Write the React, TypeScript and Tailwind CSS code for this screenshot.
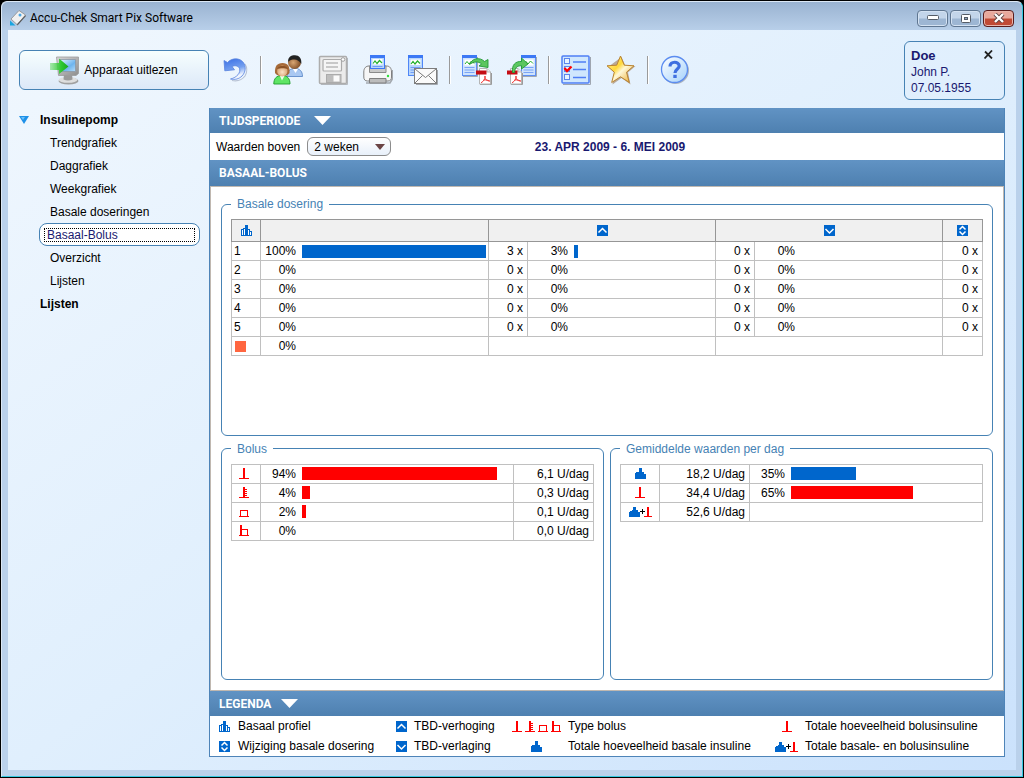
import React, { useState } from "react";

/* ---------- small symbols used in tables and legend ---------- */

const BLUE = "#0066cc";
const RED = "#ff0000";

function ProfileIcon() {
  return (
    <svg width="11" height="11" viewBox="0 0 11 11" shapeRendering="crispEdges" fill={BLUE} aria-hidden="true">
      <path d="M0 4H2V3H4V0H7V4H9V6H11V11H0Z" />
      <path fill="#fff" d="M1 5H2V10H1ZM3 4H4V10H3ZM7 5H8V10H7ZM9 7H10V10H9Z" />
    </svg>
  );
}

function BasalTotalIcon() {
  return (
    <svg width="11" height="11" viewBox="0 0 11 11" shapeRendering="crispEdges" fill={BLUE} aria-hidden="true">
      <path d="M0 11V5H1V4H4V0H7V4H9V6H11V11Z" />
    </svg>
  );
}

function ArrowTile({ kind }: { kind: "up" | "down" | "both" }) {
  return (
    <svg width="11" height="11" viewBox="0 0 11 11" aria-hidden="true">
      <rect width="11" height="11" fill={BLUE} />
      <g fill="none" stroke="#fff" strokeWidth="1.5">
        {kind === "up" && <path d="M1.5 7.5 5.5 3.5 9.5 7.5" />}
        {kind === "down" && <path d="M1.5 4 5.5 8 9.5 4" />}
        {kind === "both" && <path d="M2.5 4.5 5.5 1.5 8.5 4.5M2.5 6.5 5.5 9.5 8.5 6.5" />}
      </g>
    </svg>
  );
}

type BolusKind = "standard" | "scroll" | "extended" | "multiwave";

function BolusIcon({ kind }: { kind: BolusKind }) {
  return (
    <svg width="10" height="11" viewBox="0 0 10 11" shapeRendering="crispEdges" fill={RED} aria-hidden="true">
      <path d="M0 10H10V11H0Z" />
      {kind === "standard" && <path d="M4 0H6V10H4Z" />}
      {kind === "scroll" && <path d="M4 0H6V10H4ZM6 2H8V3H6ZM6 4H8V5H6ZM6 6H8V7H6ZM6 8H8V9H6Z" />}
      {kind === "extended" && <path d="M1 4H9V10H8V5H2V10H1Z" />}
      {kind === "multiwave" && <path d="M1 0H3V10H1ZM3 4H9V10H8V5H3Z" />}
    </svg>
  );
}

function CombinedIcon() {
  return (
    <svg width="23" height="11" viewBox="0 0 23 11" shapeRendering="crispEdges" aria-hidden="true">
      <path fill={BLUE} d="M0 11V6H1V5H3V4H4V1H7V4H9V6H11V11Z" />
      <path fill="#000" d="M11 5H16V6H11ZM13 3H14V8H13Z" />
      <path fill={RED} d="M18 1H20V10H18ZM15 10H23V11H15Z" />
    </svg>
  );
}

/* ---------- toolbar drawings ---------- */

function ReadDeviceIcon() {
  return (
    <svg width="30" height="30" viewBox="0 0 30 30" aria-hidden="true">
      <defs>
        <linearGradient id="mon" x1="0" y1="0" x2="1" y2="1">
          <stop offset="0" stopColor="#d8d8d8" />
          <stop offset="1" stopColor="#8d8d8d" />
        </linearGradient>
        <linearGradient id="scr" x1="0" y1="0" x2="1" y2="1">
          <stop offset="0" stopColor="#e8f6ff" />
          <stop offset="0.6" stopColor="#6db4ee" />
          <stop offset="1" stopColor="#b5dcfa" />
        </linearGradient>
        <linearGradient id="garr" x1="0" y1="0" x2="1" y2="0">
          <stop offset="0" stopColor="#5fd95f" stopOpacity="0.5" />
          <stop offset="0.6" stopColor="#2fc932" />
          <stop offset="1" stopColor="#19a81f" />
        </linearGradient>
      </defs>
      <ellipse cx="18.500" cy="26" rx="10" ry="3.500" fill="#a0a0a0" />
      <ellipse cx="18" cy="24.800" rx="9.300" ry="3" fill="#dedede" />
      <path d="M14 19H22L22.500 24.500Q18 26.500 13.500 24.500Z" fill="#9a9a9a" />
      <path d="M6.500 2H28.500V18.500L26 20.500H8.500Z" fill="url(#mon)" stroke="#9c9c9c" strokeWidth="0.800" />
      <path d="M9.500 4.500H25.500V16.500H10.500Z" fill="url(#scr)" stroke="#8b98a5" strokeWidth="0.800" />
      <path d="M0 8H9V3.500L18.500 11.500 9 19V15H0Z" fill="url(#garr)" />
    </svg>
  );
}

function UndoIcon() {
  return (
    <svg width="26" height="30" viewBox="0 0 26 30" aria-hidden="true">
      <defs>
        <linearGradient id="undo" x1="0.300" y1="0" x2="0.600" y2="1">
          <stop offset="0" stopColor="#3f74e6" />
          <stop offset="0.500" stopColor="#74a0f0" />
          <stop offset="0.850" stopColor="#f0f5ff" />
        </linearGradient>
      </defs>
      <path d="M9 25.500C14 26.500 19 25 22 21 24.500 17 24 12 22 9" fill="none" stroke="#b8c2d4" strokeWidth="1.200" />
      <path
        d="M1 5.500 4.500 7.500C8 3.800 13 2.800 17.500 5 23.500 8.500 23.500 16.500 19 21 16 24 12 25 7.500 24 14 22.500 18 17.500 16.500 13.500 15.300 10.800 12 10 9 11.500L11.500 14.800 1.800 15.800Z"
        fill="url(#undo)"
        stroke="#5580dd"
        strokeWidth="0.800"
      />
    </svg>
  );
}

function UsersIcon() {
  return (
    <svg width="30" height="30" viewBox="0 0 30 30" aria-hidden="true">
      <defs>
        <radialGradient id="faceA" cx="0.400" cy="0.500" r="0.600">
          <stop offset="0" stopColor="#d9a673" />
          <stop offset="1" stopColor="#7c4a22" />
        </radialGradient>
        <radialGradient id="faceB" cx="0.500" cy="0.600" r="0.600">
          <stop offset="0" stopColor="#fbe2c6" />
          <stop offset="1" stopColor="#d39a68" />
        </radialGradient>
      </defs>
      <path d="M14 21.500C14 16 17 13.500 22 13.500S29.500 16.500 29.500 21.500Z" fill="#a9c8f2" stroke="#5f8bc9" strokeWidth="0.900" />
      <path d="M20 14 22.500 18 25 14Z" fill="#fff" />
      <circle cx="21.500" cy="7.500" r="6.500" fill="url(#faceA)" />
      <path d="M15.200 7C14.800 2 18 0.300 22 0.300S29 3.500 28.300 9C26.500 6 24 4.500 21.500 4.500S16.500 5 15.200 7Z" fill="#222" />
      <path d="M0.800 29C0.800 23.500 3.500 20.500 9 20.500S17 23.500 17 29Z" fill="#5fe565" stroke="#1f9d2b" strokeWidth="0.900" />
      <path d="M7 21 9 25.500 11.500 21Z" fill="#eaffea" />
      <path d="M2 18C1.500 11.500 4 8 9.500 8S17 11.500 16.500 18C15 20.500 12 21 9.300 21S3.500 20.500 2 18Z" fill="#a66a38" />
      <ellipse cx="9.300" cy="16" rx="5.200" ry="5.400" fill="url(#faceB)" />
      <path d="M4 14C5 11.500 7 11 9.500 11S14 11.500 15 14C12 13 7 13 4 14Z" fill="#8a5226" />
    </svg>
  );
}

function SaveIcon() {
  return (
    <svg width="30" height="30" viewBox="0 0 30 30" aria-hidden="true">
      <path d="M3 29.500H29.500V3" fill="none" stroke="#b5bac0" />
      <rect x="1.500" y="1.500" width="27" height="27" rx="1" fill="#ebebeb" stroke="#adadad" strokeWidth="1.500" />
      <rect x="5" y="4.500" width="18.500" height="11.500" rx="1" fill="#f5f5f5" stroke="#ababab" strokeWidth="1.200" />
      <path d="M8 8H20M8 12H20" stroke="#b9b9b9" strokeWidth="1.400" />
      <circle cx="25" cy="4.500" r="1.800" fill="#fff" stroke="#a0a0a0" />
      <rect x="8.500" y="19.500" width="14.500" height="8" fill="#bdbdbd" stroke="#ababab" />
      <rect x="15.500" y="20.500" width="6" height="6" fill="#fafafa" />
    </svg>
  );
}

function ReportPage({ x, y }: { x: number; y: number }) {
  return (
    <g transform={`translate(${x} ${y})`}>
      <rect x="0.500" y="0.500" width="14" height="20" fill="#b9d6fb" stroke="#4f86f7" />
      <rect x="0" y="0" width="15" height="3" fill="#3c78f5" />
      <rect x="2.500" y="4.500" width="10" height="5.500" fill="#fff" />
      <path d="M3 9 5 6.500 7 9 9.500 6 12 8.500" fill="none" stroke="#23b12b" strokeWidth="1.200" />
      <path d="M2.500 12.500H12.500M2.500 15H12.500M2.500 17.500H10" stroke="#6f9df5" />
    </g>
  );
}

function PrintIcon() {
  return (
    <svg width="30" height="30" viewBox="0 0 30 30" aria-hidden="true">
      <path d="M3 28H27L29.500 24V15" fill="none" stroke="#a3a8ae" strokeWidth="1.500" />
      <path d="M0.800 17C0.800 13 3 11 6 11H23.500C27 11 28.500 13.500 28.500 17V22C28.500 24.500 27.500 26 25 26H4.500C2 26 0.800 24.500 0.800 22Z" fill="#f6f6f6" stroke="#7f7f7f" />
      <path d="M6.500 11H23V17.500H6.500Z" fill="#c9c9c9" stroke="#8a8a8a" />
      <g transform="translate(7 0)">
        <rect x="0.500" y="0.500" width="14" height="13" fill="#b9d6fb" stroke="#3c78f5" />
        <rect x="0" y="0" width="15" height="3" fill="#3c78f5" />
        <rect x="2.500" y="4" width="10" height="5.500" fill="#fff" />
        <path d="M3 8.500 5 6 7 8.500 9.500 5.500 12 8" fill="none" stroke="#23b12b" strokeWidth="1.200" />
        <path d="M2.500 11.500H12.500" stroke="#6f9df5" />
      </g>
      <path d="M6.500 23.500H23V28H6.500Z" fill="#bcbcbc" stroke="#7f7f7f" />
      <circle cx="25" cy="21" r="1.200" fill="#2ee03a" />
    </svg>
  );
}

function MailIcon() {
  return (
    <svg width="30" height="30" viewBox="0 0 30 30" aria-hidden="true">
      <ReportPage x={0} y={0} />
      <path d="M8 29.500H29.500V15" fill="none" stroke="#a3a8ae" />
      <rect x="6.500" y="13.500" width="22" height="15" fill="#fafafa" stroke="#7d7d7d" />
      <path d="M7 14 17.500 22.500 28 14M7 28 14.500 20.500M28 28 20.500 20.500" fill="none" stroke="#7d7d7d" />
    </svg>
  );
}

function WideReport({ x }: { x: number }) {
  return (
    <g transform={`translate(${x} 0)`}>
      <path d="M1 21.500H15.500V2" fill="none" stroke="#a3a8ae" />
      <rect x="0.500" y="0.500" width="14" height="20" fill="#cfe3fd" stroke="#5c8ff5" />
      <rect x="0" y="0" width="15" height="3" fill="#3c78f5" />
      <rect x="2.500" y="4.500" width="10" height="6" fill="#fff" />
      <path d="M3 9 5 6.500 7 9 9.500 6 12 8.500" fill="none" stroke="#23b12b" />
      <path d="M2.500 12.500H12.500M2.500 15H12.500M2.500 17.500H12.500" stroke="#7aa5f7" />
    </g>
  );
}

function PdfPage({ x }: { x: number }) {
  return (
    <g transform={`translate(${x} 13)`}>
      <path d="M4 16.500H15.500V5" fill="none" stroke="#9a9a9a" />
      <path d="M3.500 0.500H11L14.500 4V16H3.500Z" fill="#fff" stroke="#b5b5b5" />
      <path d="M11 0.500V4H14.500" fill="#eee" stroke="#aaa" strokeWidth="0.800" />
      <rect x="0" y="2.500" width="10.500" height="4" fill="#c40d14" />
      <path d="M9 8C9.500 11 8 13 5 14.800M9 8C8.500 11 10.500 13 14 13M7 12.300C9 11.500 11 11.800 13.500 13" fill="none" stroke="#ef3a3a" />
    </g>
  );
}

function ExportPdfIcon() {
  return (
    <svg width="30" height="30" viewBox="0 0 30 30" aria-hidden="true">
      <WideReport x={0} />
      <PdfPage x={14} />
      <path d="M7.500 9.500C9.500 3.500 17.500 1.500 22.500 6.500L26 4.500V12.500L17 11 19.500 9C16.500 6 11.500 6.500 7.500 9.500Z" fill="#5cc65f" stroke="#239a36" strokeWidth="0.900" />
    </svg>
  );
}

function ImportPdfIcon() {
  return (
    <svg width="30" height="30" viewBox="0 0 30 30" aria-hidden="true">
      <WideReport x={14} />
      <PdfPage x={0} />
      <path d="M5.500 17.500C4.500 10 8.500 6 14.500 6.500V3L21 9 14.500 14V10.800C10.500 10.500 8 12.500 7.500 17.500Z" fill="#5cc65f" stroke="#239a36" strokeWidth="0.900" />
    </svg>
  );
}

function ChecklistIcon() {
  return (
    <svg width="30" height="30" viewBox="0 0 30 30" aria-hidden="true">
      <path d="M2 29.500H29.500V2" fill="none" stroke="#9fa6b0" />
      <rect x="1" y="1" width="27" height="27" rx="1" fill="#cfe7fd" stroke="#4f7ff5" strokeWidth="1.500" />
      <g fill="#e6f3ff" stroke="#5b85ee">
        <rect x="3.500" y="3.500" width="5" height="5" />
        <rect x="3.500" y="11.500" width="5" height="5" />
        <rect x="3.500" y="19.500" width="5" height="5" />
      </g>
      <path d="M12 7H25M12 14.500H25M12 22.500H25" stroke="#4f7ff5" strokeWidth="1.500" />
      <path d="M3.500 13 6 16 10.500 11.500" fill="none" stroke="#f00" strokeWidth="2.200" />
    </svg>
  );
}

function StarIcon() {
  return (
    <svg width="30" height="30" viewBox="0 0 30 30" aria-hidden="true">
      <defs>
        <linearGradient id="star" x1="0" y1="0" x2="1" y2="1">
          <stop offset="0" stopColor="#fff3a8" />
          <stop offset="0.400" stopColor="#ffd83a" />
          <stop offset="0.550" stopColor="#fff8d8" />
          <stop offset="1" stopColor="#e8a21a" />
        </linearGradient>
      </defs>
      <path d="M15.500 2 19.500 11H29.500L22 17.500 24.500 29.500 15.500 23 6.500 29.500 8.500 17.500 2 12Z" fill="#b9a998" />
      <path d="M14.500 1 18.300 10.200 28 10.800 20.500 17.200 23.300 27.500 14.500 21.800 5.700 27.500 8.300 17.200 1 10.800 10.700 10.200Z" fill="url(#star)" stroke="#b98331" strokeLinejoin="round" />
    </svg>
  );
}

function HelpIcon() {
  return (
    <svg width="30" height="30" viewBox="0 0 30 30" aria-hidden="true">
      <defs>
        <linearGradient id="help" x1="0" y1="0" x2="1" y2="1">
          <stop offset="0" stopColor="#ffffff" />
          <stop offset="1" stopColor="#a5d2fb" />
        </linearGradient>
      </defs>
      <circle cx="15.500" cy="15.500" r="13.500" fill="#aab3bf" />
      <circle cx="14.500" cy="14.500" r="13" fill="url(#help)" stroke="#5b8cf0" strokeWidth="1.300" />
      <path d="M10 11.500C10 5.800 19.200 6 19.200 11 19.200 14 15 14 15 18" fill="none" stroke="#3f6fe0" strokeWidth="3.200" />
      <rect x="13.300" y="19.800" width="3.400" height="3.200" fill="#3f6fe0" />
    </svg>
  );
}

function AppLogo() {
  return (
    <svg width="16" height="16" viewBox="0 0 16 16" aria-hidden="true">
      <path d="M1 9 9 0.500 15.500 5 7 14.500Z" fill="#f1f1f1" stroke="#8b8b8b" strokeWidth="0.800" />
      <path d="M7 14.500 15.500 5V6.500L7.500 15.500Z" fill="#555" />
      <circle cx="10" cy="5" r="1.500" fill="#4aa7e6" />
      <path d="M0 15.500V10.500L5.500 15.500Z" fill="#19a5e0" />
    </svg>
  );
}

/* ---------- layout pieces ---------- */

function ToolButton({ label, children }: { label: string; children: React.ReactNode }) {
  return (
    <button type="button" aria-label={label} className="shrink-0">
      {children}
    </button>
  );
}

function Separator() {
  return <span className="mx-[11px] h-7 w-0.5 shrink-0 border-l border-[#9a9a9a] bg-white" />;
}

function TitleBarButton({ label, danger, children }: { label: string; danger?: boolean; children: React.ReactNode }) {
  return (
    <button
      type="button"
      aria-label={label}
      className={
        danger
          ? "flex h-[17px] w-[31px] items-center justify-center rounded-sm border border-[#5a1d1d] bg-linear-to-b from-[#e8a89c] from-45% to-[#c04a35] to-55% shadow-[inset_0_0_0_1px_#e9b5ab]"
          : "flex h-[17px] w-[31px] items-center justify-center rounded-sm border border-[#5f7691] bg-linear-to-b from-[#c3d5ea] from-45% to-[#9db6d3] to-55% shadow-[inset_0_0_0_1px_#d4e2f2]"
      }
    >
      {children}
    </button>
  );
}

function BarTriangle() {
  return (
    <svg width="17" height="9" viewBox="0 0 17 9" fill="#fff" aria-hidden="true">
      <path d="M0 0H17L8.500 9Z" />
    </svg>
  );
}

const barClass =
  "flex w-full shrink-0 items-center bg-linear-to-b from-[#6193c4] to-[#4e80b0] pl-[9px] font-[Roboto,sans-serif] font-bold text-white";

function Panel({ title, className, children }: { title: string; className?: string; children: React.ReactNode }) {
  return (
    <fieldset className={`min-w-0 rounded-md border border-[#4682b4] px-[9px] pb-2 ${className ?? ""}`}>
      <legend className="px-1.5 leading-[14px] text-[#4682b4]">{title}</legend>
      {children}
    </fieldset>
  );
}

function PercentBar({ value, color, wideLabel, inset }: { value: number; color?: "blue" | "red"; wideLabel?: boolean; inset?: boolean }) {
  return (
    <div className="flex items-center gap-1.5">
      <span className={wideLabel ? "w-10 shrink-0 text-right" : "w-[35px] shrink-0 text-right"}>{value}%</span>
      <span className={inset ? "mr-1 flex-1" : "mr-0.5 flex-1"}>
        <span
          className={color === "red" ? "block h-[13px] bg-[#ff0000]" : "block h-[13px] bg-[#0066cc]"}
          style={{ width: `${value}%` }}
        />
      </span>
    </div>
  );
}

const cell = "h-[19px] border border-[#c0c0c0] p-0 leading-4";
const head = "h-[22px] border border-[#969696] bg-[#f0f0f0] p-0";

const basalRows = [
  { id: "1", share: 100, up: 3, upPct: 3, down: 0, downPct: 0, changes: 0 },
  { id: "2", share: 0, up: 0, upPct: 0, down: 0, downPct: 0, changes: 0 },
  { id: "3", share: 0, up: 0, upPct: 0, down: 0, downPct: 0, changes: 0 },
  { id: "4", share: 0, up: 0, upPct: 0, down: 0, downPct: 0, changes: 0 },
  { id: "5", share: 0, up: 0, upPct: 0, down: 0, downPct: 0, changes: 0 },
];

const bolusRows: { kind: BolusKind; pct: number; amount: string }[] = [
  { kind: "standard", pct: 94, amount: "6,1 U/dag" },
  { kind: "scroll", pct: 4, amount: "0,3 U/dag" },
  { kind: "extended", pct: 2, amount: "0,1 U/dag" },
  { kind: "multiwave", pct: 0, amount: "0,0 U/dag" },
];

const navItems = ["Trendgrafiek", "Daggrafiek", "Weekgrafiek", "Basale doseringen", "Basaal-Bolus", "Overzicht", "Lijsten"];

function BasalTable() {
  return (
    <table className="mt-2 w-full table-fixed border-collapse">
      <colgroup>
        <col className="w-[29px]" />
        <col className="w-[228px]" />
        <col className="w-[39px]" />
        <col />
        <col className="w-[39px]" />
        <col />
        <col className="w-10" />
      </colgroup>
      <thead>
        <tr>
          <th className={head} aria-label="Basaal profiel">
            <span className="flex justify-center"><ProfileIcon /></span>
          </th>
          <th className={head} />
          <th className={head} colSpan={2} aria-label="TBD-verhoging">
            <span className="flex justify-center"><ArrowTile kind="up" /></span>
          </th>
          <th className={head} colSpan={2} aria-label="TBD-verlaging">
            <span className="flex justify-center"><ArrowTile kind="down" /></span>
          </th>
          <th className={head} aria-label="Wijziging basale dosering">
            <span className="flex justify-center"><ArrowTile kind="both" /></span>
          </th>
        </tr>
      </thead>
      <tbody>
        {basalRows.map((r) => (
          <tr key={r.id}>
            <td className={`${cell} pl-0.5`}>{r.id}</td>
            <td className={cell}><PercentBar value={r.share} /></td>
            <td className={`${cell} pr-1 text-right`}>{r.up} x</td>
            <td className={cell}><PercentBar value={r.upPct} wideLabel /></td>
            <td className={`${cell} pr-1 text-right`}>{r.down} x</td>
            <td className={cell}><PercentBar value={r.downPct} wideLabel /></td>
            <td className={`${cell} pr-1 text-right`}>{r.changes} x</td>
          </tr>
        ))}
        <tr>
          <td className={`${cell} pl-[3px]`}>
            <span className="block size-[11px] bg-[#ff6640]" />
          </td>
          <td className={cell}><PercentBar value={0} /></td>
          <td className={cell} colSpan={2} />
          <td className={cell} colSpan={2} />
          <td className={cell} />
        </tr>
      </tbody>
    </table>
  );
}

function BolusTable() {
  return (
    <table className="mt-2 w-full table-fixed border-collapse">
      <colgroup>
        <col className="w-[29px]" />
        <col />
        <col className="w-20" />
      </colgroup>
      <tbody>
        {bolusRows.map((r) => (
          <tr key={r.kind}>
            <td className={cell}><span className="flex justify-center pr-1"><BolusIcon kind={r.kind} /></span></td>
            <td className={cell}><PercentBar value={r.pct} color="red" inset /></td>
            <td className={`${cell} pr-1 text-right`}>{r.amount}</td>
          </tr>
        ))}
      </tbody>
    </table>
  );
}

function AverageTable() {
  return (
    <table className="mt-2 w-full table-fixed border-collapse">
      <colgroup>
        <col className="w-[39px]" />
        <col className="w-[90px]" />
        <col />
      </colgroup>
      <tbody>
        <tr>
          <td className={cell}><span className="flex justify-center"><BasalTotalIcon /></span></td>
          <td className={`${cell} pr-1 text-right`}>18,2 U/dag</td>
          <td className={cell}><PercentBar value={35} inset /></td>
        </tr>
        <tr>
          <td className={cell}><span className="flex justify-center"><BolusIcon kind="standard" /></span></td>
          <td className={`${cell} pr-1 text-right`}>34,4 U/dag</td>
          <td className={cell}><PercentBar value={65} color="red" inset /></td>
        </tr>
        <tr>
          <td className={cell}><span className="flex justify-center"><CombinedIcon /></span></td>
          <td className={`${cell} pr-1 text-right`}>52,6 U/dag</td>
          <td className={cell} />
        </tr>
      </tbody>
    </table>
  );
}

export default function App() {
  const [active, setActive] = useState("Basaal-Bolus");

  return (
    <div className="flex min-h-screen bg-black p-px font-['Liberation_Sans',Arial,sans-serif] text-[12px] text-black">
      <div className="flex min-w-0 flex-1 flex-col rounded-t-md border border-t-[#dce8f5] border-r-[#35c8e0] border-b-[#35c8e0] border-l-[#dce8f5] bg-[#bad1eb]">
        <header className="flex h-7 shrink-0 items-center rounded-t-md bg-linear-to-b from-[#9ab3d1] to-[#b8cfe9] px-2 pt-1">
          <AppLogo />
          <h1 className="ml-1 flex-1 font-[Roboto,sans-serif] leading-4">Accu-Chek Smart Pix Software</h1>
          <div className="flex gap-0.5">
            <TitleBarButton label="Minimaliseren">
              <svg width="12" height="6" viewBox="0 0 12 6"><rect x="0.500" y="0.500" width="11" height="4" rx="1" fill="#fff" stroke="#555c66" /></svg>
            </TitleBarButton>
            <TitleBarButton label="Maximaliseren">
              <svg width="12" height="9" viewBox="0 0 12 9"><rect x="1.500" y="0.500" width="9" height="8" rx="1" fill="#fff" stroke="#555c66" /><rect x="4.500" y="3.500" width="3" height="2" fill="#8fa5c0" stroke="#555c66" /></svg>
            </TitleBarButton>
            <TitleBarButton label="Sluiten" danger>
              <svg width="12" height="10" viewBox="0 0 12 10"><path d="M2 1 10 9M10 1 2 9" stroke="#5a4040" strokeWidth="4" /><path d="M2 1 10 9M10 1 2 9" stroke="#fff" strokeWidth="2.400" /></svg>
            </TitleBarButton>
          </div>
        </header>

        <div className="mx-1.5 mb-1.5 flex flex-1 flex-col bg-linear-to-br from-[#f0f7fe] via-[#e0effd] to-[#cbe2fc]">
          <div className="flex h-[78px] shrink-0 items-start px-[11px] pt-[11px]">
            <div className="mt-[9px] flex h-10 items-center">
              <button
                type="button"
                className="mr-[14px] flex h-10 w-[190px] items-center justify-center gap-1 rounded-md border border-[#4682b4] bg-linear-to-b from-[#f6fefe] to-[#dce8f8]"
              >
                <ReadDeviceIcon />
                Apparaat uitlezen
              </button>
              <ToolButton label="Ongedaan maken"><UndoIcon /></ToolButton>
              <Separator />
              <div className="flex gap-[15px]">
                <ToolButton label="Patiënten"><UsersIcon /></ToolButton>
                <ToolButton label="Opslaan"><SaveIcon /></ToolButton>
                <ToolButton label="Afdrukken"><PrintIcon /></ToolButton>
                <ToolButton label="E-mail"><MailIcon /></ToolButton>
              </div>
              <Separator />
              <div className="flex gap-[15px]">
                <ToolButton label="PDF exporteren"><ExportPdfIcon /></ToolButton>
                <ToolButton label="PDF importeren"><ImportPdfIcon /></ToolButton>
              </div>
              <Separator />
              <div className="flex gap-[15px]">
                <ToolButton label="Instellingen"><ChecklistIcon /></ToolButton>
                <ToolButton label="Favorieten"><StarIcon /></ToolButton>
              </div>
              <Separator />
              <ToolButton label="Help"><HelpIcon /></ToolButton>
            </div>

            <div className="ml-auto flex h-[59px] w-[101px] items-start justify-between rounded-md border border-[#4682b4] pt-1.5 pr-[11px] pl-1.5 text-[#191970]">
              <div className="leading-4">
                <p className="text-[13px] font-bold">Doe</p>
                <p>John P.</p>
                <p>07.05.1955</p>
              </div>
              <button type="button" aria-label="Patiënt sluiten" className="mt-0.5">
                <svg width="9" height="9" viewBox="0 0 9 9"><path d="M1 1.500 8 8.500M8 0.500 0.500 8.500" stroke="#222" strokeWidth="1.800" /></svg>
              </button>
            </div>
          </div>

          <div className="flex flex-1">
            <nav className="w-[201px] shrink-0">
              <div className="flex h-[23px] items-center pl-[11px] font-bold">
                <svg width="10" height="8" viewBox="0 0 10 8" aria-hidden="true">
                  <path d="M0 0H10L5 8Z" fill="#1e90e8" />
                  <path d="M2 1H6L4 4Z" fill="#6cc0f8" />
                </svg>
                <a href="#insulinepomp" className="ml-[11px]">Insulinepomp</a>
              </div>
              <ul className="pr-[9px] pl-[31px]">
                {navItems.map((item) => (
                  <li key={item}>
                    <a
                      href="#"
                      onClick={(e) => {
                        e.preventDefault();
                        setActive(item);
                      }}
                      className={
                        item === active
                          ? "flex h-[23px] items-center rounded-lg border border-[#4682b4] bg-white px-1 text-[#191970]"
                          : "flex h-[23px] items-center pl-[11px]"
                      }
                    >
                      {item === active ? (
                        <span className="flex-1 border border-dotted border-black pl-0.5 leading-3">{item}</span>
                      ) : (
                        item
                      )}
                    </a>
                  </li>
                ))}
              </ul>
              <a href="#lijsten" className="flex h-[23px] items-center pl-8 font-bold">Lijsten</a>
            </nav>

            <main className="mr-[11px] mb-[13px] flex min-w-0 flex-1 flex-col border border-t-0 border-[#4e84b8] bg-white">
              <button type="button" aria-expanded="true" className={`${barClass} h-[25px] gap-[14px]`}>
                TIJDSPERIODE
                <BarTriangle />
              </button>
              <div className="grid h-[27px] shrink-0 grid-cols-[1fr_auto_1fr] items-center pl-1.5">
                <div className="flex items-center gap-[7px]">
                  <label htmlFor="period">Waarden boven</label>
                  <div className="relative">
                    <select
                      id="period"
                      defaultValue="2"
                      className="block h-[19px] w-[84px] appearance-none rounded-md border border-[#8c8c8c] bg-linear-to-b from-white to-[#e8f0fa] pl-1.5 leading-4"
                    >
                      <option value="1">1 week</option>
                      <option value="2">2 weken</option>
                      <option value="4">4 weken</option>
                    </select>
                    <svg className="pointer-events-none absolute top-[7px] right-1.5" width="10" height="6" viewBox="0 0 10 6" aria-hidden="true">
                      <path d="M0 0H10L5 6Z" fill="#6b4545" />
                    </svg>
                  </div>
                </div>
                <p className="font-bold text-[#191970]">23. APR 2009 - 6. MEI 2009</p>
              </div>
              <h2 className={`${barClass} h-[26px]`}>BASAAL-BOLUS</h2>

              <div className="grid flex-1 grid-cols-2 grid-rows-2 gap-1.5 border border-[#c0b8b0] p-[10px]">
                <Panel title="Basale dosering" className="col-span-2">
                  <BasalTable />
                </Panel>
                <Panel title="Bolus">
                  <BolusTable />
                </Panel>
                <Panel title="Gemiddelde waarden per dag">
                  <AverageTable />
                </Panel>
              </div>

              <button type="button" aria-expanded="true" className={`${barClass} h-[25px] gap-[10px]`}>
                LEGENDA
                <BarTriangle />
              </button>
              <ul className="grid shrink-0 grid-cols-[177px_116px_263px_1fr] pl-[9px] leading-5 whitespace-nowrap">
                <li className="flex items-center gap-2"><ProfileIcon />Basaal profiel</li>
                <li className="flex items-center gap-[7px]"><ArrowTile kind="up" />TBD-verhoging</li>
                <li className="flex items-center gap-[7px]">
                  <span className="flex w-[49px] gap-[3px]">
                    <BolusIcon kind="standard" />
                    <BolusIcon kind="scroll" />
                    <BolusIcon kind="extended" />
                    <BolusIcon kind="multiwave" />
                  </span>
                  Type bolus
                </li>
                <li className="flex items-center gap-[7px]">
                  <span className="flex w-[23px] justify-center"><BolusIcon kind="standard" /></span>
                  Totale hoeveelheid bolusinsuline
                </li>
                <li className="flex items-center gap-2"><ArrowTile kind="both" />Wijziging basale dosering</li>
                <li className="flex items-center gap-[7px]"><ArrowTile kind="down" />TBD-verlaging</li>
                <li className="flex items-center gap-[7px]">
                  <span className="flex w-[49px] justify-center"><BasalTotalIcon /></span>
                  Totale hoeveelheid basale insuline
                </li>
                <li className="flex items-center gap-[7px]">
                  <CombinedIcon />
                  Totale basale- en bolusinsuline
                </li>
              </ul>
            </main>
          </div>
        </div>
      </div>
    </div>
  );
}
